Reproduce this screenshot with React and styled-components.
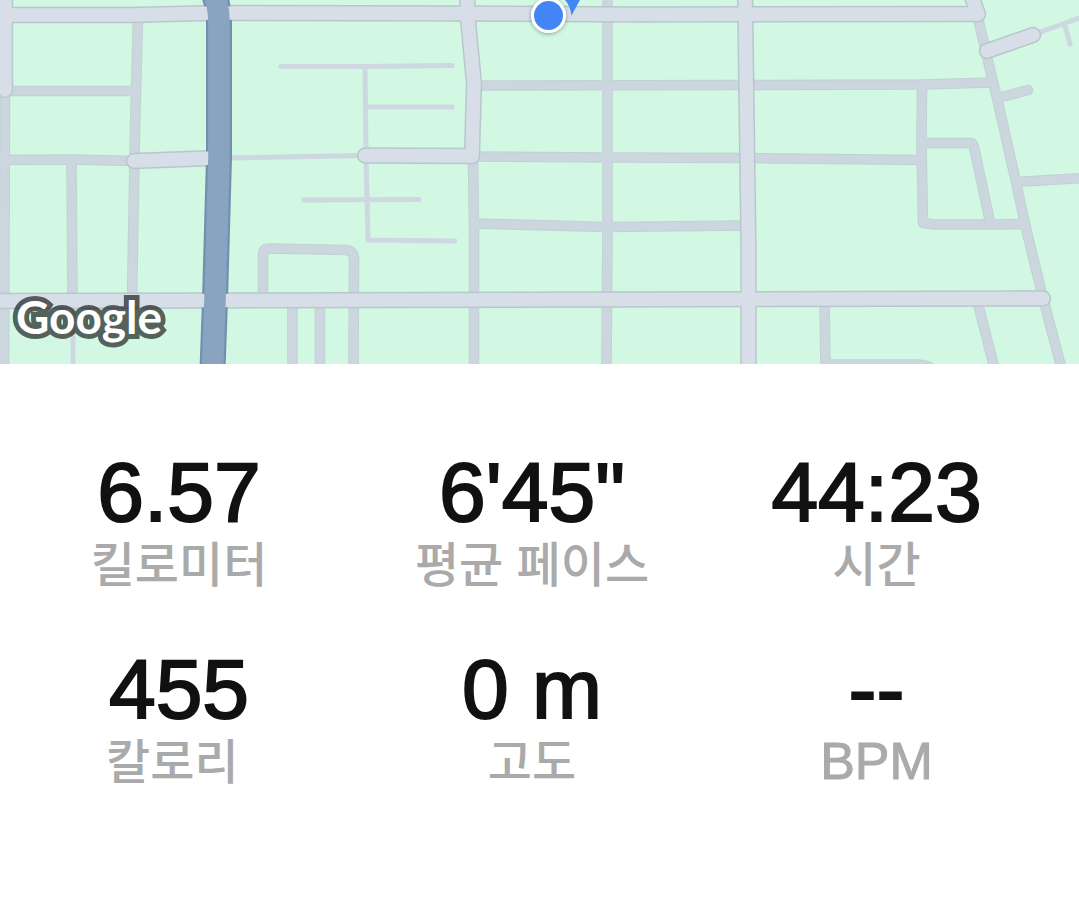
import React from 'react';
import styled, { createGlobalStyle } from 'styled-components';

const GlobalStyle = createGlobalStyle`
  body {
    margin: 0;
    background: #ffffff;
  }
`
const Page = styled.main`
  font-family: "Liberation Sans", "Noto Sans CJK KR", sans-serif;
  color: #111111;
`
const MapBox = styled.section`
  height: 364px;
  overflow: hidden;
  background: #d2f7e2;
`
const MapSvg = styled.svg`
  display: block;
  width: 100%;
  height: 100%;
`
const Road = styled.path`
  fill: none;
  stroke: ${(props) => props.$color};
  stroke-width: ${(props) => props.$width}px;
  stroke-linecap: round;
  stroke-linejoin: round;
`
const LogoText = styled.text`
  font-family: Lato, sans-serif;
  font-size: 46px;
  font-weight: 700;
`
const StatGrid = styled.dl`
  display: grid;
  grid-template-columns: 358fr 348fr 341fr;
  row-gap: 49px;
  margin: 0;
  padding: 86px 32px 86px 0;
`
const StatBox = styled.div`
  display: flex;
  flex-direction: column-reverse;
  justify-content: flex-end;
  align-items: center;
`
const StatValue = styled.dd`
  margin: 0;
  font-size: 84px;
  line-height: 84px;
  white-space: nowrap;
  -webkit-text-stroke: 2px #111111;
`
const StatLabel = styled.dt`
  font-size: ${(props) => (props.$latin ? '52px' : '48px')};
  line-height: ${(props) => (props.$latin ? '60px' : '64px')};
  font-weight: 500;
  color: #aaaaaa;
  white-space: nowrap;
  -webkit-text-stroke: ${(props) => (props.$latin ? '1px #aaaaaa' : '0')};
`

const lanes = [
  'M281 66.5 H365 L452 65.5',
  'M365 67 L366 156 L368 240 L455 241',
  'M366 107 H452',
  'M304 200 L419 199.5',
  'M228 158 L364 155.5',
  'M1032 35 L1082 17',
  'M1065 26 L1070 44',
  'M73 301 V370',
]

const streets = [
  'M5 90 L4 370',
  'M138 16 L135 130 L132 300',
  'M5 91 H136',
  'M-5 160 L72 159.5 L133 161',
  'M71.5 160 L72.5 300',
  'M263 300 V253 Q264 249 268 248.5 L347 250 Q353 251 354 258 L353.5 370',
  'M292.5 302 V370',
  'M320 302 V370',
  'M473 156 L474 230 V370',
  'M607.5 -5 V227 L606.5 370',
  'M475 85.5 L745 85 L922 84.5 L993 82.5',
  'M473 156.5 L607 157.5 L745 158 L922 160',
  'M474 223.5 L607 227 L745 225.5',
  'M922 85 L921.5 143 L923 223 L934 224.5 H991 L1025 224',
  'M922 143 H971 Q973 143 974 147 L990.5 224',
  'M977 14 L992 78 L997 98 L1016 182 L1025 224 L1043 298 L1062 370',
  'M998 98 L1028 90',
  'M1016 182 L1084 178',
  'M977 300 L995 370',
  'M824.5 300 L825.5 370',
  'M826 364.5 H918 Q928 365 932 369',
]

const avenues = [
  'M-8 15 H130 L214 13',
  'M225 13 L460 13.5 L640 14.5 L978 14',
  'M5 -8 V90',
  'M467 -8 L468 20 L474 83 L472 156 L365 155.5',
  'M134 161 L215 158',
  'M745 -8 L748.5 250 V372',
  'M-8 301 L215 300.5',
  'M222 300.5 L607 299.5 L1043 298.5',
  'M970 -8 L978 14',
  'M987 51 L1033 35',
]

const highway = 'M212 -10 Q219 4 219 22 V158 L215 300 L212.5 370'

const stats = [
  { label: '킬로미터', value: '6.57' },
  { label: '평균 페이스', value: '6\'45"' },
  { label: '시간', value: '44:23' },
  { label: '칼로리\u00a0', value: '455' },
  { label: '고도', value: '0 m' },
  { label: 'BPM', value: '--', latin: true },
]

const Roads = ({ paths, color, width }) =>
  paths.map((d) => <Road key={d} d={d} $color={color} $width={width} />)

const RunMap = () => {
  return (
    <MapBox>
      <MapSvg viewBox="0 0 1079 364" preserveAspectRatio="xMidYMid slice">
        <defs>
          <filter id="dotShadow" x="-50%" y="-50%" width="200%" height="200%">
            <feDropShadow dx="0" dy="1" stdDeviation="2" floodOpacity="0.35" />
          </filter>
        </defs>
        <Roads paths={streets} color="#c0d2d3" width={10.6} />
        <Roads paths={lanes} color="#cdd8e1" width={5} />
        <Roads paths={streets} color="#ccd6df" width={8.6} />
        <Roads paths={avenues} color="#b7c8cc" width={16.4} />
        <Road d={highway} $color="#6f91ae" $width={26} />
        <Roads paths={avenues} color="#d7dee7" width={13.4} />
        <Road d={highway} $color="#8aa3c0" $width={21.6} />
        {/* heading cone and current position */}
        <path d="M563 -2 Q570 4 571.5 15.5 L581 -2 Z" fill="#4285f4" />
        <circle cx="548.5" cy="15.5" r="17.5" fill="#ffffff" filter="url(#dotShadow)" />
        <circle cx="548.5" cy="15.5" r="14.5" fill="#4285f4" />
        {/* one translucent halo behind the whole wordmark */}
        <g opacity="0.6">
          <use href="#logo" fill="#000000" stroke="#000000" strokeWidth="10" />
        </g>
        <g fill="#ffffff">
          <LogoText id="logo" x="16" y="334">Google</LogoText>
        </g>
      </MapSvg>
    </MapBox>
  );
}

const Stat = ({ label, value, latin }) => {
  return (
    <StatBox>
      <StatLabel $latin={latin}>{label}</StatLabel>
      <StatValue>{value}</StatValue>
    </StatBox>
  );
}

const App = () => {
  return (
    <Page>
      <GlobalStyle />
      <RunMap />
      <StatGrid>
        {stats.map((stat) => (
          <Stat key={stat.label} {...stat} />
        ))}
      </StatGrid>
    </Page>
  );
}

export default App;
